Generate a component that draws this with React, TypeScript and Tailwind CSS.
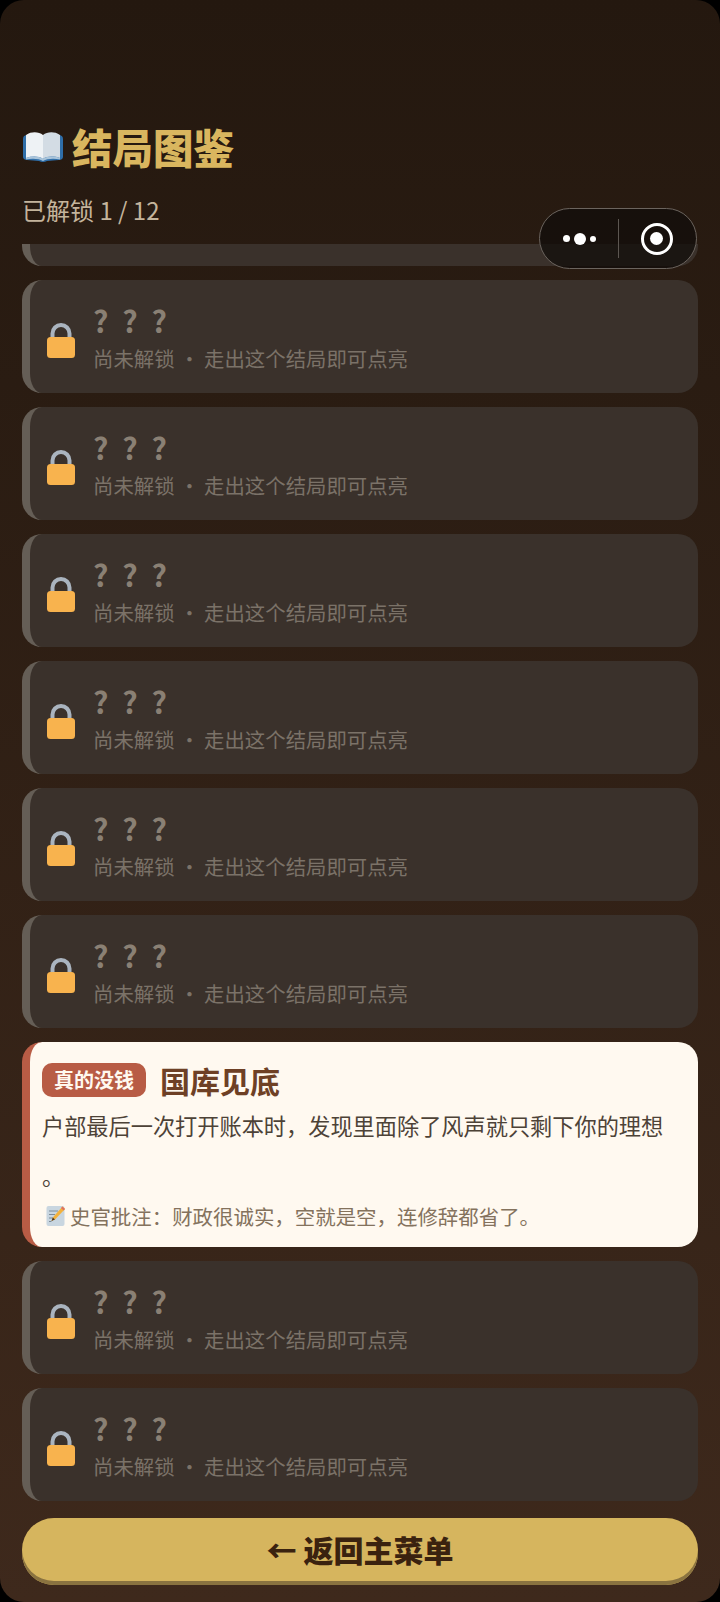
const cjk = { fontFamily: '"Noto Sans CJK SC", "Noto Sans", sans-serif' };

function LockIcon() {
  return (
    <svg width="30" height="38" viewBox="0 0 30 38" className="shrink-0">
      <path d="M6.5 17V11.5a8.5 8.5 0 0 1 17 0V17" fill="none" stroke="#aab4bf" strokeWidth="4" />
      <rect x="1" y="15" width="28" height="21" rx="3.5" fill="#f8b34e" />
    </svg>
  );
}

function BookIcon() {
  return (
    <svg width="42" height="32" viewBox="0 0 42 32" className="shrink-0">
      <path d="M1 8 C1 5 3 4 5 4 L21 6 L37 4 C39 4 41 5 41 8 V26 C41 28 39 29 37 29 L25 30 Q21 32 17 30 L5 29 C3 29 1 28 1 26 Z" fill="#2f6ea8" />
      <path d="M4 4 C10 0 17 1 21 4 V28 C17 25 10 25 4 27 Z" fill="#eef2f5" />
      <path d="M38 4 C32 0 25 1 21 4 V28 C25 25 32 25 38 27 Z" fill="#d3dce4" />
      <path d="M4 27 C10 25 17 25 21 28 C25 25 32 25 38 27 V28.5 C32 27 25 27.5 21 30 C17 27.5 10 27 4 28.5 Z" fill="#a9c4da" />
    </svg>
  );
}

function MemoIcon() {
  return (
    <svg width="20" height="22" viewBox="0 0 20 22" className="shrink-0">
      <rect x="0.5" y="1" width="18" height="20" rx="2" fill="#c9d6e0" />
      <path d="M3 6H12M3 9.5H9M3 13H7M3 16.5H5.5" stroke="#7d8b98" strokeWidth="1.2" />
      <path d="M16.5 1.5 L19 4 L9 14.5 L5.5 16 L6.8 12.5 Z" fill="#f3b23c" />
      <path d="M16.5 1.5 L19 4 L17.6 5.5 L15 3 Z" fill="#e0705f" />
      <path d="M5.5 16 L6.8 12.5 L9 14.5 Z" fill="#4a3a2c" />
    </svg>
  );
}

function LockedCard({ first }: { first?: boolean }) {
  return (
    <div
      className={`flex h-[113px] shrink-0 items-center rounded-[20px] border-l-[8px] border-[#655e56] bg-[#3a312b] pl-[16px] ${first ? "-mt-[91px]" : ""}`}
    >
      <div className="mt-[8px]">
        <LockIcon />
      </div>
      <div className="ml-[17px] mt-[6px] flex flex-col">
        <div className="text-[30px] font-bold leading-[37px] tracking-[3.5px] text-[#8a8074]">? ? ?</div>
        <div className="text-[20.4px] leading-[38px] text-[#7b7268]">尚未解锁 · 走出这个结局即可点亮</div>
      </div>
    </div>
  );
}

function UnlockedCard() {
  return (
    <div className="h-[205px] shrink-0 rounded-[20px] border-l-[8px] border-[#b85c45] bg-[#fff9f0] pl-[12px] pt-[18px]">
      <div className="flex items-center">
        <span className="rounded-[10px] bg-[#b85c45] px-[12px] py-[2px] text-[20px] font-bold leading-[30px] text-[#fff9f0]">真的没钱</span>
        <span className="ml-[14px] text-[30px] font-bold leading-[40px] text-[#6e4025]">国库见底</span>
      </div>
      <div className="text-[22.2px] leading-[50px] text-[#4d4237]">
        户部最后一次打开账本时，发现里面除了风声就只剩下你的理想
        <br />。
      </div>
      <div className="mt-[4px] flex items-center pl-[4px] text-[20.45px] leading-[24px] text-[#84725d]">
        <MemoIcon />
        <span className="ml-[4px]">史官批注：财政很诚实，空就是空，连修辞都省了。</span>
      </div>
    </div>
  );
}

export default function App() {
  return (
    <div className="bg-black" style={cjk}>
      <div className="relative flex h-[1602px] w-[720px] flex-col overflow-hidden rounded-[24px] bg-gradient-to-b from-[#24180f] to-[#3e291c] px-[22px] pb-[17px] pt-[118px]">
        <div className="flex items-center gap-[8px]">
          <BookIcon />
          <h1 className="text-[40.5px] font-black leading-[58px] text-[#d9b65f]">结局图鉴</h1>
        </div>
        <div className="mt-[16px] text-[24px] leading-[36px] text-[#c4b49c]">已解锁 1 / 12</div>
        <div className="mt-[16px] flex h-[1257px] flex-col gap-[14px] overflow-hidden">
          <LockedCard first />
          <LockedCard />
          <LockedCard />
          <LockedCard />
          <LockedCard />
          <LockedCard />
          <LockedCard />
          <UnlockedCard />
          <LockedCard />
          <LockedCard />
        </div>
        <button className="mt-[17px] h-[67px] w-full shrink-0 rounded-[32px] bg-[#d6b55e] pb-[4px] text-[30px] font-black text-[#3a220f] shadow-[inset_0_-4px_0_#8a7340]">
          ← 返回主菜单
        </button>
        <div className="absolute left-[539px] top-[208px] flex h-[61px] w-[158px] items-center rounded-full border-[1.5px] border-[#6b645e] bg-[#120e0b]/75">
          <div className="flex w-[78px] items-center justify-center gap-[4px]">
            <span className="size-[7px] rounded-full bg-white" />
            <span className="size-[12px] rounded-full bg-white" />
            <span className="size-[6px] rounded-full bg-white" />
          </div>
          <div className="h-[39px] w-px bg-[#5c5651]" />
          <div className="flex flex-1 items-center justify-center pr-[2px]">
            <div className="flex size-[32px] items-center justify-center rounded-full border-[3.5px] border-white">
              <span className="size-[13px] rounded-full bg-white" />
            </div>
          </div>
        </div>
      </div>
    </div>
  );
}
